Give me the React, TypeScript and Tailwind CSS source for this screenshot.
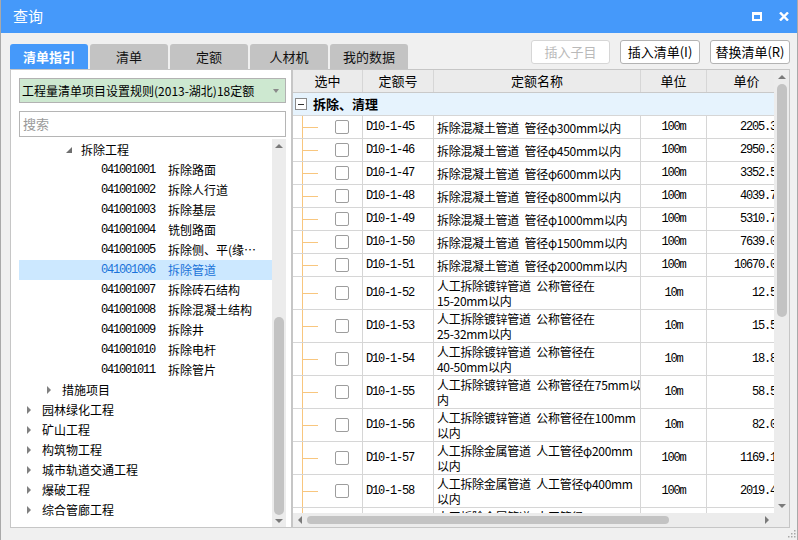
import React from "react";

type TreeNode = {
  level: number;
  text?: string;
  code?: string;
  open?: boolean;
  selected?: boolean;
};

const treeRows: TreeNode[] = [
  { level: 3, text: "拆除工程", open: true },
  { level: 4, code: "041001001", text: "拆除路面" },
  { level: 4, code: "041001002", text: "拆除人行道" },
  { level: 4, code: "041001003", text: "拆除基层" },
  { level: 4, code: "041001004", text: "铣刨路面" },
  { level: 4, code: "041001005", text: "拆除侧、平(缘…" },
  { level: 4, code: "041001006", text: "拆除管道", selected: true },
  { level: 4, code: "041001007", text: "拆除砖石结构" },
  { level: 4, code: "041001008", text: "拆除混凝土结构" },
  { level: 4, code: "041001009", text: "拆除井" },
  { level: 4, code: "041001010", text: "拆除电杆" },
  { level: 4, code: "041001011", text: "拆除管片" },
  { level: 2, text: "措施项目" },
  { level: 1, text: "园林绿化工程" },
  { level: 1, text: "矿山工程" },
  { level: 1, text: "构筑物工程" },
  { level: 1, text: "城市轨道交通工程" },
  { level: 1, text: "爆破工程" },
  { level: 1, text: "综合管廊工程" },
];

type QuotaRow = { code: string; name: string[]; unit: string; price: string };

const quotaRows: QuotaRow[] = [
  { code: "D10-1-45", name: ["拆除混凝土管道\u2002管径φ300mm以内"], unit: "100m", price: "2205.32" },
  { code: "D10-1-46", name: ["拆除混凝土管道\u2002管径φ450mm以内"], unit: "100m", price: "2950.32" },
  { code: "D10-1-47", name: ["拆除混凝土管道\u2002管径φ600mm以内"], unit: "100m", price: "3352.55" },
  { code: "D10-1-48", name: ["拆除混凝土管道\u2002管径φ800mm以内"], unit: "100m", price: "4039.77" },
  { code: "D10-1-49", name: ["拆除混凝土管道\u2002管径φ1000mm以内"], unit: "100m", price: "5310.77" },
  { code: "D10-1-50", name: ["拆除混凝土管道\u2002管径φ1500mm以内"], unit: "100m", price: "7639.06" },
  { code: "D10-1-51", name: ["拆除混凝土管道\u2002管径φ2000mm以内"], unit: "100m", price: "10670.06" },
  { code: "D10-1-52", name: ["人工拆除镀锌管道\u2002公称管径在", "15-20mm以内"], unit: "10m", price: "12.55" },
  { code: "D10-1-53", name: ["人工拆除镀锌管道\u2002公称管径在", "25-32mm以内"], unit: "10m", price: "15.55" },
  { code: "D10-1-54", name: ["人工拆除镀锌管道\u2002公称管径在", "40-50mm以内"], unit: "10m", price: "18.85" },
  { code: "D10-1-55", name: ["人工拆除镀锌管道\u2002公称管径在75mm以", "内"], unit: "10m", price: "58.55" },
  { code: "D10-1-56", name: ["人工拆除镀锌管道\u2002公称管径在100mm", "以内"], unit: "10m", price: "82.06" },
  { code: "D10-1-57", name: ["人工拆除金属管道\u2002人工管径φ200mm", "以内"], unit: "100m", price: "1169.12" },
  { code: "D10-1-58", name: ["人工拆除金属管道\u2002人工管径φ400mm", "以内"], unit: "100m", price: "2019.42" },
  { code: "D10-1-59", name: ["人工拆除金属管道\u2002人工管径φ600mm", "以内"], unit: "100m", price: "2856.10" },
];

const tabs = ["清单指引", "清单", "定额", "人材机", "我的数据"];

const mono = "font-['Liberation_Mono',monospace] text-[12px] tracking-[-1.2px]";

function TitleBar() {
  return (
    <div className="h-[33px] bg-[#4599fa] flex items-center pl-[12px] pr-[8px] text-white">
      <span className="text-[15px]">查询</span>
      <div className="ml-auto flex items-center gap-[17px]">
        <div className="w-[10px] h-[9px] border-2 border-t-[3px] border-white" />
        <svg width="10" height="9" viewBox="0 0 10 9">
          <path d="M1 0.5 L9 8.5 M9 0.5 L1 8.5" stroke="white" strokeWidth="2.4" />
        </svg>
      </div>
    </div>
  );
}

function Triangle({ open }: { open?: boolean }) {
  if (open) {
    return <div className="w-0 h-0 border-l-[6px] border-l-transparent border-b-[6px] border-b-[#6f6f6f]" />;
  }
  return <div className="w-0 h-0 border-y-[4px] border-y-transparent border-l-[4px] border-l-[#808080]" />;
}

function LeftPanel() {
  const pad: Record<number, string> = { 1: "pl-[8px]", 2: "pl-[28px]", 3: "pl-[47px]" };
  return (
    <div className="w-[282px] h-full bg-white border border-[#c6c6c6] flex flex-col pt-[8px] pl-[8px]">
      <div className="w-[267px] h-[25px] bg-[#cde8d0] border border-[#b2b2b2] flex items-center pl-[2px] pr-[6px]">
        <span className="text-[12px] whitespace-nowrap">工程量清单项目设置规则(2013-湖北)18定额</span>
        <div className="ml-auto w-0 h-0 border-x-[3px] border-x-transparent border-t-[4px] border-t-[#8a8a8a]" />
      </div>
      <div className="w-[267px] h-[26px] mt-[8px] border border-[#b5b5b5] flex items-center pl-[3px]">
        <span className="text-[13px] text-[#9a9a9a]">搜索</span>
      </div>
      <div className="w-[267px] flex-1 mt-[2px] flex min-h-0">
        <div className="flex-1 pt-[1px] overflow-hidden">
          {treeRows.map((r, i) =>
            r.level === 4 ? (
              <div
                key={i}
                className={`h-[20px] flex items-center pl-[82px] ${r.selected ? "bg-[#cce8ff] text-[#1a73d9]" : ""}`}
              >
                <span className={`w-[67px] ${mono}`}>{r.code}</span>
                <span className="whitespace-nowrap">{r.text}</span>
              </div>
            ) : (
              <div key={i} className={`h-[20px] flex items-center ${pad[r.level]}`}>
                <div className="w-[15px] flex items-center">
                  <Triangle open={r.open} />
                </div>
                <span className="whitespace-nowrap">{r.text}</span>
              </div>
            )
          )}
        </div>
        <div className="w-[14px] bg-[#ececec] flex flex-col items-center">
          <div className="h-[14px] flex items-center justify-center">
            <div className="w-0 h-0 border-x-[4px] border-x-transparent border-b-[4px] border-b-[#7a7a7a]" />
          </div>
          <div className="flex-1" />
          <div className="w-[10px] h-[198px] rounded-full bg-[#c3c3c3]" />
          <div className="h-[12px] flex items-center justify-center">
            <div className="w-0 h-0 border-x-[4px] border-x-transparent border-t-[4px] border-t-[#7a7a7a]" />
          </div>
        </div>
      </div>
    </div>
  );
}

function Checkbox() {
  return <div className="w-[14px] h-[14px] bg-white border border-[#9d9d9d] rounded-[2px]" />;
}

function QuotaTable() {
  const cell = "border-r border-[#d6d6d6] shrink-0";
  return (
    <div className="w-[494px]">
      <div className="h-[23px] flex bg-[#ebebeb] border-b border-[#c9c9c9] text-[13px]">
        <div className={`${cell} w-[70px] flex items-center justify-center border-[#c9c9c9]`}>选中</div>
        <div className={`${cell} w-[71px] flex items-center justify-center border-[#c9c9c9]`}>定额号</div>
        <div className={`${cell} w-[207px] flex items-center justify-center border-[#c9c9c9]`}>定额名称</div>
        <div className={`${cell} w-[66px] flex items-center justify-center border-[#c9c9c9]`}>单位</div>
        <div className={`${cell} w-[80px] flex items-center justify-center border-[#c9c9c9]`}>单价</div>
      </div>
      <div className="h-[23px] flex items-center bg-[#e6f3fd] border-b border-[#d6d6d6] pl-[2px]">
        <div className="w-[12px] h-[12px] bg-white border border-[#8a8a8a] flex items-center justify-center">
          <div className="w-[6px] h-px bg-[#333]" />
        </div>
        <span className="ml-[6px] text-[13px] font-bold">拆除、清理</span>
      </div>
      {quotaRows.map((r) => (
        <div
          key={r.code}
          className={`flex border-b border-[#d6d6d6] bg-white ${r.name.length > 1 ? "h-[33px]" : "h-[23px]"}`}
        >
          <div className={`${cell} w-[70px] flex items-stretch`}>
            <div className="w-[9px]" />
            <div className="w-[16px] border-l border-[#f8c67e] flex items-center">
              <div className="h-px w-full bg-[#f8c67e]" />
            </div>
            <div className="w-[17px]" />
            <div className="flex items-center">
              <Checkbox />
            </div>
          </div>
          <div className={`${cell} w-[71px] flex items-center pl-[3px] ${mono}`}>{r.code}</div>
          <div className={`${cell} w-[207px] flex flex-col justify-center pl-[3px] leading-[15px] tracking-[-0.3px] overflow-hidden`}>
            {r.name.map((l, i) => (
              <div key={i} className="whitespace-nowrap">
                {l}
              </div>
            ))}
          </div>
          <div className={`${cell} w-[66px] flex items-center justify-center ${mono}`}>{r.unit}</div>
          <div className={`${cell} w-[80px] flex items-center justify-end pr-[4px] ${mono}`}>{r.price}</div>
        </div>
      ))}
    </div>
  );
}

function RightPanel() {
  return (
    <div className="w-[498px] h-full bg-white border border-[#c6c6c6] flex flex-col">
      <div className="flex-1 flex min-h-0">
        <div className="flex-1 overflow-hidden">
          <QuotaTable />
        </div>
        <div className="w-[15px] bg-[#ececec] flex flex-col items-center">
          <div className="h-[14px] flex items-center justify-center">
            <div className="w-0 h-0 border-x-[4px] border-x-transparent border-b-[4px] border-b-[#7a7a7a]" />
          </div>
          <div className="w-[10px] h-[233px] rounded-full bg-[#c3c3c3]" />
          <div className="flex-1" />
          <div className="h-[14px] flex items-center justify-center">
            <div className="w-0 h-0 border-x-[4px] border-x-transparent border-t-[4px] border-t-[#7a7a7a]" />
          </div>
        </div>
      </div>
      <div className="h-[14px] flex">
        <div className="flex-1 bg-[#ececec] flex items-center">
          <div className="w-[14px] flex items-center justify-center">
            <div className="w-0 h-0 border-y-[4px] border-y-transparent border-r-[4px] border-r-[#7a7a7a]" />
          </div>
          <div className="w-[362px] h-[8px] rounded-full bg-[#c3c3c3]" />
          <div className="flex-1" />
          <div className="w-[14px] flex items-center justify-center">
            <div className="w-0 h-0 border-y-[4px] border-y-transparent border-l-[4px] border-l-[#7a7a7a]" />
          </div>
        </div>
        <div className="w-[15px] bg-[#ececec]" />
      </div>
    </div>
  );
}

export default function App() {
  return (
    <div className="relative w-[798px] h-[540px] bg-[#f0f0f0] border-x border-[#a9a9a9] flex flex-col overflow-hidden font-['Noto_Sans_CJK_SC',sans-serif] text-[12px] text-black">
      <TitleBar />
      <div className="h-[36px] flex items-start pl-[9px] pr-[7px]">
        <div className="mt-[11px] flex gap-[2px]">
          {tabs.map((t, i) => (
            <div
              key={t}
              className={`w-[78px] h-[25px] rounded-t-[3px] flex items-center justify-center text-[13px] ${
                i === 0 ? "bg-[#4599fa] text-white font-bold" : "bg-[#c3c3c3] text-[#111]"
              }`}
            >
              {t}
            </div>
          ))}
        </div>
        <div className="ml-auto mt-[7px] flex gap-[10px]">
          <button className="w-[79px] h-[24px] bg-white border border-[#d6d6d6] rounded-[3px] text-[13px] text-[#b9b9b9]">
            插入子目
          </button>
          <button className="w-[80px] h-[24px] bg-white border border-[#b3b3b3] rounded-[3px] text-[13px]">
            插入清单(I)
          </button>
          <button className="w-[80px] h-[24px] bg-white border border-[#b3b3b3] rounded-[3px] text-[13px]">
            替换清单(R)
          </button>
        </div>
      </div>
      <div className="h-[459px] flex pl-[9px] pr-[7px]">
        <LeftPanel />
        <RightPanel />
      </div>
      <svg className="absolute right-[1px] bottom-[2px]" width="8" height="8" viewBox="0 0 8 8">
        <rect x="6" y="0" width="1.5" height="1.5" fill="#a8a8a8" />
        <rect x="3" y="3" width="1.5" height="1.5" fill="#a8a8a8" />
        <rect x="6" y="3" width="1.5" height="1.5" fill="#a8a8a8" />
        <rect x="0" y="6" width="1.5" height="1.5" fill="#a8a8a8" />
        <rect x="3" y="6" width="1.5" height="1.5" fill="#a8a8a8" />
        <rect x="6" y="6" width="1.5" height="1.5" fill="#a8a8a8" />
      </svg>
    </div>
  );
}
